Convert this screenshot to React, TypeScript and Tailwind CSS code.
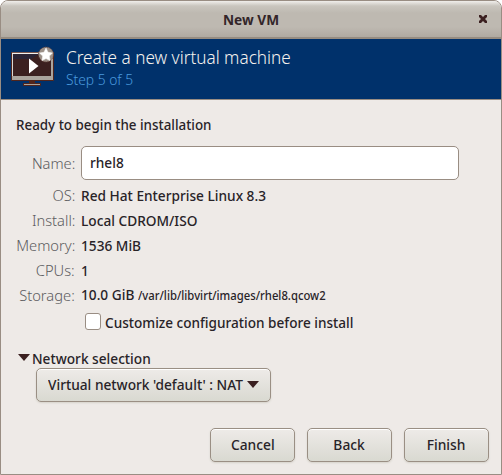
import type { ReactNode } from 'react';

const buttonStyle =
  'h-[34px] rounded-[5px] border border-[#9a8f84] bg-gradient-to-b from-[#eeebe8] to-[#d9d9d1] shadow-[0_1px_2px_#d5d2ca,inset_0_1px_0_white] flex items-center justify-center pb-[2px] font-medium';

const narrow = 'inline-block origin-left scale-x-[0.912] whitespace-nowrap';

function Row({ label, children }: { label: string; children: ReactNode }) {
  return (
    <div className="flex h-[25px] items-center pb-[2px] whitespace-nowrap">
      <span className="w-[74px] text-right text-[#5c5c60] font-light"><span className="inline-block origin-right scale-x-[0.98]">{label}</span></span>
      <span className="ml-[6px] font-medium">{children}</span>
    </div>
  );
}

function VmIcon() {
  return (
    <svg width="46" height="42" viewBox="0 0 46 42" fill="none">
      <path d="M2.5 6.5H44.5V34.5H2.5Z" fill="#aaa49d" stroke="#50251c" />
      <path d="M3 7.5H43" stroke="#f3f0ec" strokeWidth="1.5" />
      <path d="M3.5 8V30" stroke="#ddd8d2" />
      <path d="M4 8H42V30H4Z" fill="#3b2020" />
      <path d="M4 8H30L22 13H4Z" fill="#17294d" opacity=".45" />
      <path d="M20 12.5V27.5L29.5 20Z" fill="white" />
      <path d="M20 35H26V37H20Z" fill="#50251c" />
      <path d="M14 37H32V40H14Z" fill="#50251c" />
      <path d="M15 38H31V39H15Z" fill="#aaa49d" />
      <circle cx="37" cy="8.5" r="7.5" fill="#9b9088" stroke="#654039" strokeDasharray="1 1" />
      <path d="M37 2L39 6.3L43.5 7L40.3 10.1L41 14.6L37 12.5L33 14.6L33.7 10.1L30.5 7L35 6.3Z" fill="white" stroke="white" strokeWidth=".5" />
    </svg>
  );
}

export default function App() {
  return (
    <div className="flex h-[475px] w-[502px] flex-col overflow-hidden rounded-t-[8px] border border-[#998d83] bg-[#eeeae7] font-['Noto_Sans','Open_Sans',sans-serif] text-[15px] leading-[20px] text-[#282328]">
      <header className="flex h-[38px] shrink-0 items-center border-b-2 border-[#968c81] bg-[linear-gradient(to_bottom,#f0eeeb_0px,#c9c5be_5px,#beb9b1_12px,#beb9b1_26px,#b0aaa1_36px)]">
        <span className="ml-[222px] w-[56px] text-[15px] font-bold text-[#33262a]"><span className={narrow}>New VM</span></span>
        <svg className="ml-auto mr-[14px]" width="8" height="8" viewBox="0 0 8 8"><path d="M0 0H2L4 2L6 0H8V2L6 4L8 6V8H6L4 6L2 8H0V6L2 4L0 2Z" fill="#3b2020" /></svg>
      </header>
      <section className="flex h-[61px] shrink-0 border-b border-[#998d83] bg-[#00316b]">
        <div className="ml-[8px] mt-[7px]"><VmIcon /></div>
        <div className="ml-[11px] mt-[6px] whitespace-nowrap">
          <div className="h-[23px] origin-left scale-x-[0.953] text-[18px] leading-[24px] font-light text-[#f5f2ee]">Create a new virtual machine</div>
          <div className="origin-left scale-x-[0.92] text-[15px] leading-[23px] font-light text-[#4a9ade]">Step 5 of 5</div>
        </div>
      </section>
      <main className="flex flex-1 flex-col">
        <div className="ml-[15px] mt-[14px] h-[21px] font-medium"><span className="inline-block origin-left scale-x-[0.893]">Ready to begin the installation</span></div>
        <div className="mt-[11px] flex h-[34px] items-center">
          <span className="w-[74px] text-right font-light text-[#5c5c60]"><span className="inline-block origin-right scale-x-[0.98]">Name:</span></span>
          <div className="ml-[6px] flex h-[34px] w-[378px] items-center rounded-[5px] border border-[#998d83] bg-white pb-[2px] pl-[8px] font-medium"><span className={narrow}>rhel8</span></div>
        </div>
        <div className="mt-[3px]">
          <Row label="OS:"><span className={narrow}>Red Hat Enterprise Linux 8.3</span></Row>
          <Row label="Install:"><span className={narrow}>Local CDROM/ISO</span></Row>
          <Row label="Memory:"><span className={narrow}>1536 MiB</span></Row>
          <Row label="CPUs:"><span className={narrow}>1</span></Row>
          <Row label="Storage:">
            <span className="flex items-baseline">
              <span className="w-[57px]"><span className={narrow}>10.0 GiB</span></span>
              <span className="origin-left scale-x-[0.94] text-[12px]">/var/lib/libvirt/images/rhel8.qcow2</span>
            </span>
          </Row>
        </div>
        <div className="ml-[84px] mt-[5px] flex h-[17px] items-center">
          <span className="h-[17px] w-[16px] rounded-[3px] border border-[#998d83] bg-white" />
          <span className="ml-[4px] inline-block origin-left scale-x-[0.906] font-medium whitespace-nowrap">Customize configuration before install</span>
        </div>
        <div className="ml-[17px] mt-[18px] flex h-[20px] items-center">
          <svg className="-mt-px" width="12" height="7" viewBox="0 0 12 7"><path d="M0 0H12L6 7Z" fill="#3b2020" /></svg>
          <span className={`${narrow} ml-[2px] font-medium`}>Network selection</span>
        </div>
        <div className={`${buttonStyle} ml-[35px] w-[235px] shrink-0`}>
          <span className="w-[195px]"><span className="inline-block origin-left scale-x-[0.914] whitespace-nowrap">Virtual network 'default' : NAT</span></span>
          <svg className="ml-[4px]" width="12" height="7" viewBox="0 0 12 7"><path d="M0 0H12L6 7Z" fill="#3b2020" /></svg>
        </div>
        <footer className="mt-auto mr-[12px] mb-[12px] flex justify-end gap-[12px]">
          <button className={`${buttonStyle} w-[85px]`}><span className="scale-x-[0.92]">Cancel</span></button>
          <button className={`${buttonStyle} w-[85px]`}><span className="scale-x-[0.92]">Back</span></button>
          <button className={`${buttonStyle} w-[85px]`}><span className="scale-x-[0.92]">Finish</span></button>
        </footer>
      </main>
    </div>
  );
}
